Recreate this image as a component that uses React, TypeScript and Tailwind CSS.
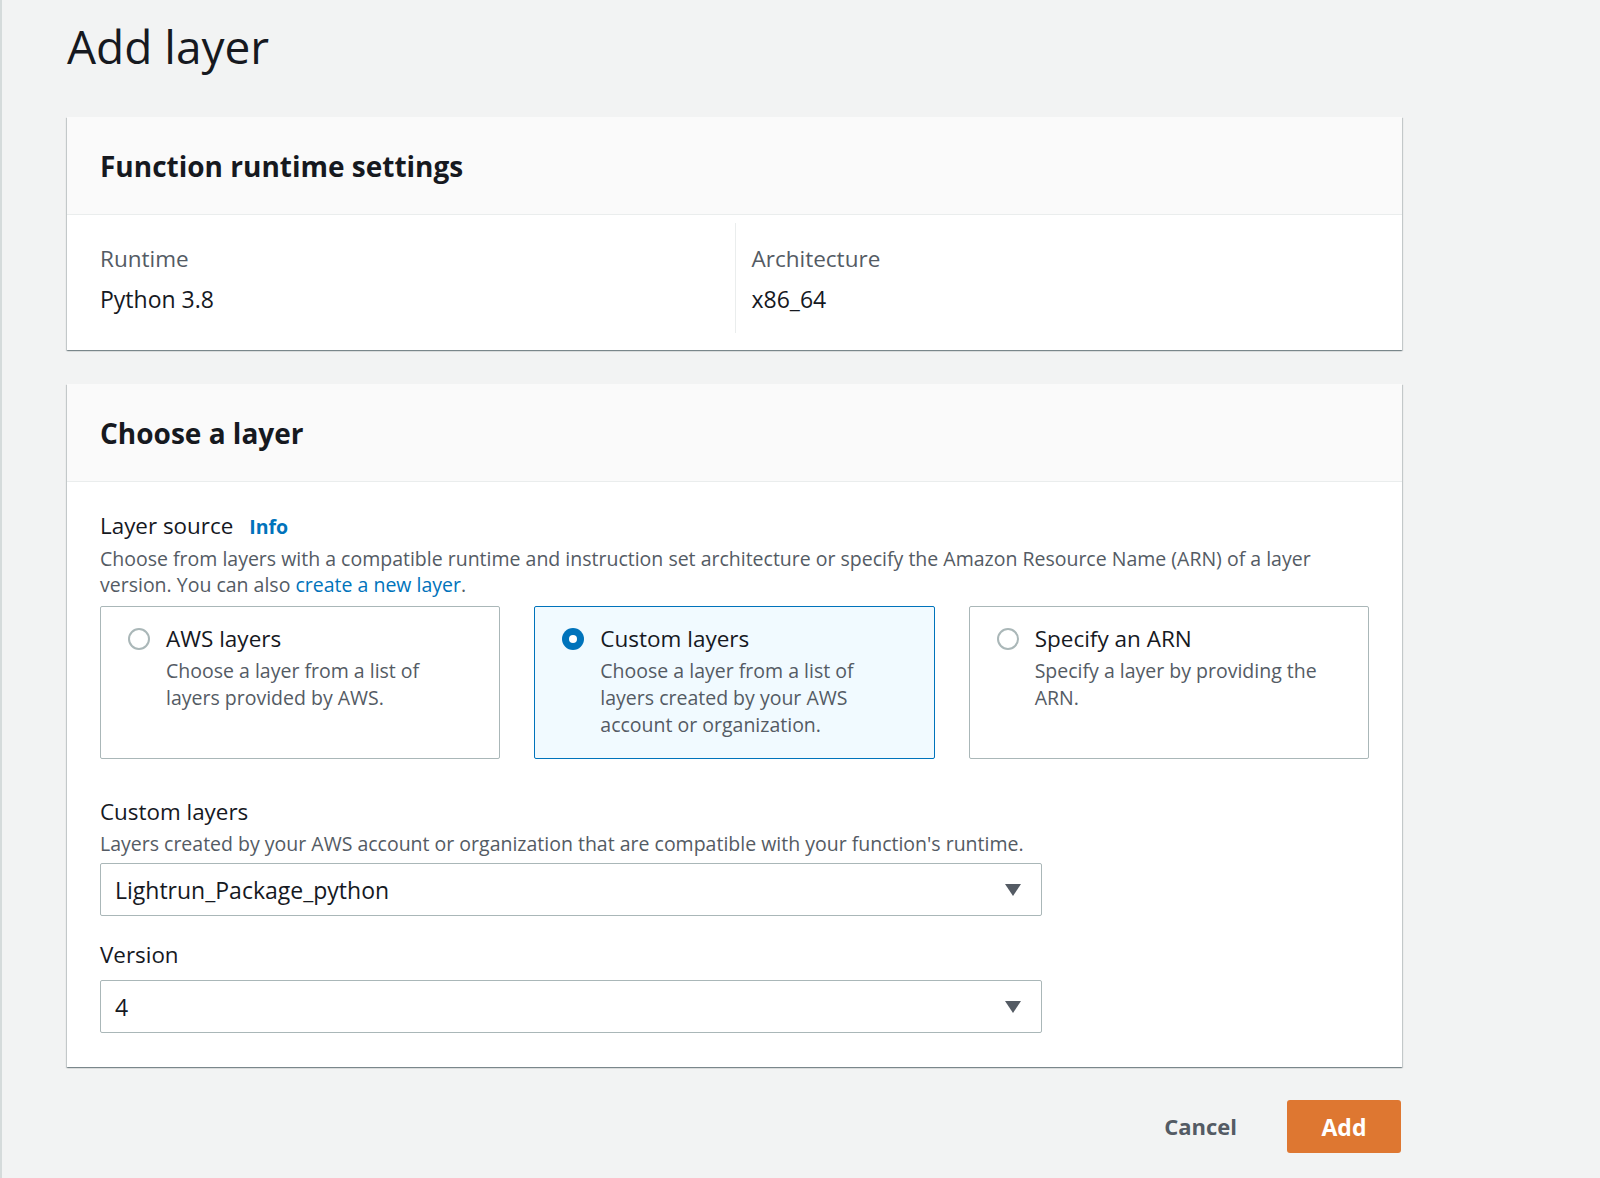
import React, { useState } from "react";

type Source = "aws" | "custom" | "arn";

const sources: { id: Source; title: string; desc: string }[] = [
    { id: "aws", title: "AWS layers", desc: "Choose a layer from a list of layers provided by AWS." },
    { id: "custom", title: "Custom layers", desc: "Choose a layer from a list of layers created by your AWS account or organization." },
    { id: "arn", title: "Specify an ARN", desc: "Specify a layer by providing the ARN." },
];

const cardShadow =
    "shadow-[0_1px_1px_0_rgba(0,28,36,0.3),1px_1px_1px_0_rgba(0,28,36,0.15),-1px_1px_1px_0_rgba(0,28,36,0.15)]";

function Caret() {
    return (
        <svg width="18" height="14" viewBox="0 0 18 14" className="shrink-0">
            <path d="M1 1 H17 L9 13 Z" fill="#545b64" />
        </svg>
    );
}

function Select({ value }: { value: string }) {
    return (
        <div className="flex h-[53px] w-[942px] items-center justify-between rounded-[2px] border border-[#aab7b8] bg-white pl-[14px] pr-[19px]">
            <span className="text-[23px] leading-[30px] text-[#16191f]">{value}</span>
            <Caret />
        </div>
    );
}

export default function App() {
    const [source, setSource] = useState<Source>("custom");

    return (
        <div
            className="min-h-screen border-l-2 border-[#d5dbdb] bg-[#f2f3f3] pl-[65px] pb-[26px]"
            style={{ fontFamily: '"Open Sans", "Noto Sans", sans-serif' }}
        >
            <div className="w-[1335px]">
                <h1 className="pt-[18px] text-[46px] leading-[56px] font-normal text-[#16191f]">Add layer</h1>

                {/* Function runtime settings */}
                <div className={`mt-[43px] bg-white ${cardShadow}`}>
                    <div className="flex h-[98px] items-center border-b border-[#eaeded] bg-[#fafafa] px-[33px]">
                        <h2 className="text-[28px] leading-[38px] font-bold text-[#16191f]">Function runtime settings</h2>
                    </div>
                    <div className="grid grid-cols-2 px-[33px] pt-[8px] pb-[17px]">
                        <div className="pt-[21px] pb-[19px]">
                            <div className="text-[22.5px] leading-[30px] text-[#545b64]">Runtime</div>
                            <div className="mt-[10px] text-[23px] leading-[30px] text-[#16191f]">Python 3.8</div>
                        </div>
                        <div className="border-l border-[#eaeded] pl-[16px] pt-[21px] pb-[19px]">
                            <div className="text-[22.5px] leading-[30px] text-[#545b64]">Architecture</div>
                            <div className="mt-[10px] text-[23px] leading-[30px] text-[#16191f]">x86_64</div>
                        </div>
                    </div>
                </div>

                {/* Choose a layer */}
                <div className={`mt-[34px] bg-white ${cardShadow}`}>
                    <div className="flex h-[98px] items-center border-b border-[#eaeded] bg-[#fafafa] px-[33px]">
                        <h2 className="text-[28px] leading-[38px] font-bold text-[#16191f]">Choose a layer</h2>
                    </div>
                    <div className="px-[33px] pt-[29px] pb-[34px]">
                        <div className="flex items-baseline gap-[16px]">
                            <span className="text-[22.4px] leading-[30px] text-[#16191f]">Layer source</span>
                            <a className="text-[19.5px] font-bold text-[#0073bb]">Info</a>
                        </div>
                        <p className="mt-[5px] text-[19.5px] leading-[26px] text-[#545b64]">
                            Choose from layers with a compatible runtime and instruction set architecture or specify the Amazon
                            Resource Name (ARN) of a layer version. You can also{" "}
                            <a className="text-[#0073bb]">create a new layer</a>.
                        </p>

                        <div className="mt-[8px] grid grid-cols-3 gap-[34px]">
                            {sources.map((s) => {
                                const active = source === s.id;
                                return (
                                    <div
                                        key={s.id}
                                        onClick={() => setSource(s.id)}
                                        className={
                                            active
                                                ? "flex cursor-pointer gap-[16px] rounded-[2px] border border-[#0073bb] bg-[#f1faff] pl-[27px] pr-[40px] pt-[16px] pb-[20px]"
                                                : "flex cursor-pointer gap-[16px] rounded-[2px] border border-[#aab7b8] bg-white pl-[27px] pr-[40px] pt-[16px] pb-[20px]"
                                        }
                                    >
                                        <div className="pt-[5px]">
                                            {active ? (
                                                <div className="flex h-[22px] w-[22px] items-center justify-center rounded-full bg-[#0073bb]">
                                                    <div className="h-[8px] w-[8px] rounded-full bg-white" />
                                                </div>
                                            ) : (
                                                <div className="h-[22px] w-[22px] rounded-full border-2 border-[#aab7b8] bg-white" />
                                            )}
                                        </div>
                                        <div>
                                            <div className="text-[22.5px] leading-[31px] text-[#16191f]">{s.title}</div>
                                            <div className="mt-[3px] text-[19.5px] leading-[27px] text-[#545b64]">{s.desc}</div>
                                        </div>
                                    </div>
                                );
                            })}
                        </div>

                        <div className="mt-[38px] text-[22.4px] leading-[30px] text-[#16191f]">Custom layers</div>
                        <div className="mt-[4px] text-[19.5px] leading-[26px] text-[#545b64]">
                            Layers created by your AWS account or organization that are compatible with your function's runtime.
                        </div>
                        <div className="mt-[6px]">
                            <Select value="Lightrun_Package_python" />
                        </div>

                        <div className="mt-[24px] text-[22.4px] leading-[30px] text-[#16191f]">Version</div>
                        <div className="mt-[10px]">
                            <Select value="4" />
                        </div>
                    </div>
                </div>

                {/* Actions */}
                <div className="mt-[33px] flex items-center justify-end gap-[34px]">
                    <button className="px-[16px] text-[22px] font-bold text-[#545b64]">Cancel</button>
                    <button className="mr-[1px] h-[53px] w-[114px] rounded-[3px] bg-[#de7731] text-[23px] font-bold text-white">
                        Add
                    </button>
                </div>
            </div>
        </div>
    );
}
